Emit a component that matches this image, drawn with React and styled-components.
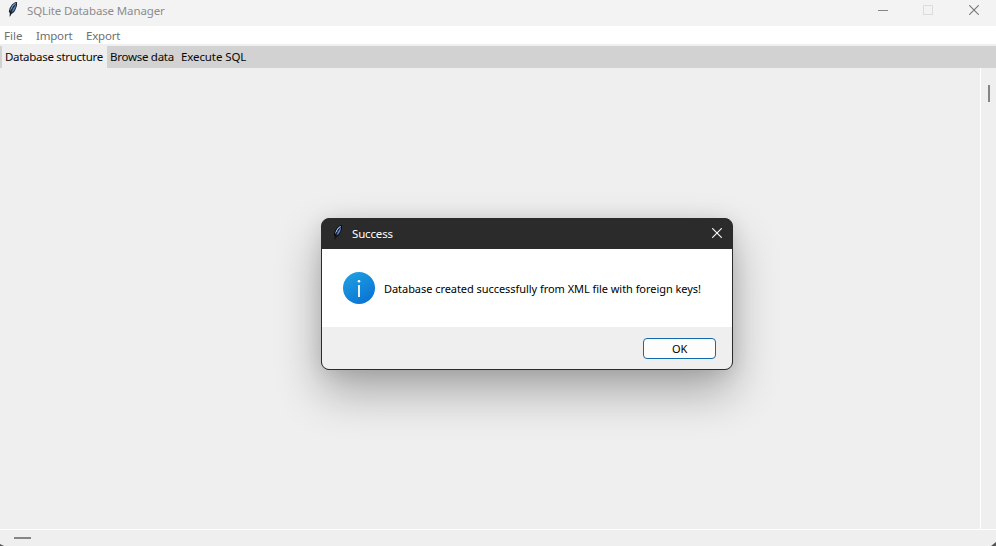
import React from 'react';
import styled, { createGlobalStyle } from 'styled-components';

const GlobalStyle = createGlobalStyle`
  *, *::before, *::after { box-sizing: border-box; }
  html, body { margin: 0; padding: 0; overflow: hidden; background: #efefef; }
  button { font: inherit; padding: 0; border: 0; background: none; color: inherit; }
`;

const Window = styled.div`
  position: relative;
  display: flex;
  flex-direction: column;
  width: 996px;
  height: 546px;
  overflow: hidden;
  background: #efefef;
  color: #111;
  font-family: 'Noto Sans', 'Open Sans', sans-serif;
  font-size: 11.5px;
  line-height: 16px;
  white-space: nowrap;
`;

const Label = styled.span`
  display: block;
  letter-spacing: ${(p) => p.$track || 0}px;
`;

const TitleBar = styled.header`
  display: flex;
  flex: 0 0 26px;
  padding-left: 6px;
  background: #f3f3f3;
  color: #8d8d8d;
`;

const TitleText = styled.h1`
  flex: 1;
  margin: 3px 0 0 6px;
  font-size: 11.5px;
  font-weight: 400;
`;

const FeatherIcon = styled.svg`
  display: block;
  flex: none;
  width: 15px;
  height: 18px;
  margin-top: ${(p) => p.$top}px;
`;

const WindowControls = styled.div`
  display: flex;
  height: 20px;
`;

const ControlButton = styled.button`
  display: grid;
  place-items: center;
  width: ${(p) => p.$width}px;
  height: ${(p) => p.$height || 20}px;
  margin-left: ${(p) => p.$gap || 0}px;
  color: ${(p) => p.$color};
  svg { display: block; }
`;

const MenuBar = styled.nav`
  display: flex;
  flex: 0 0 18px;
  gap: 14px;
  padding: 2px 4px 0;
  background: #fff;
  color: #6f6f6f;
`;

const MenuItem = styled.button`
  width: ${(p) => p.$width}px;
  height: 16px;
  text-align: left;
`;

const TabBar = styled.div`
  display: flex;
  flex: 0 0 22px;
  margin-top: 2px;
  padding-left: 2px;
  background: #d2d2d2;
`;

const Tab = styled.button`
  width: ${(p) => p.$width}px;
  height: 22px;
  padding: 0 3px;
  text-align: left;
  color: #080808;
  background: ${(p) => (p.$active ? '#efefef' : 'transparent')};
`;

const Workspace = styled.main`
  display: flex;
  flex: 1;
  border-bottom: 1px solid #fff;
`;

const Canvas = styled.section`
  flex: 1;
`;

const VerticalTrack = styled.div`
  width: 16px;
  padding: 17px 0 0 7px;
  border-left: 1px solid #fff;
`;

const HorizontalTrack = styled.div`
  display: flex;
  flex: 0 0 16px;
  padding: 7px 0 0 14px;
`;

const Thumb = styled.div`
  width: ${(p) => (p.$vertical ? 2 : 17)}px;
  height: ${(p) => (p.$vertical ? 17 : 2)}px;
  background: #858585;
`;

const WindowCorner = styled.svg`
  position: absolute;
  bottom: 0;
  ${(p) => (p.$right ? 'right: 0;' : 'left: 0;')}
`;

const Dialog = styled.section`
  position: absolute;
  left: 321px;
  top: 218px;
  display: flex;
  flex-direction: column;
  width: 412px;
  height: 152px;
  overflow: hidden;
  border: 1px solid #2b2b2b;
  border-radius: 8px;
  background: #2b2b2b;
  box-shadow: 0 22px 46px rgba(0, 0, 0, 0.3), 0 2px 20px rgba(0, 0, 0, 0.1);
`;

const DialogHeader = styled.header`
  display: flex;
  flex: 0 0 30px;
  padding-left: 9px;
  color: #fff;
`;

const DialogTitle = styled.h2`
  flex: 1;
  margin: 7px 0 0 6px;
  font-size: 11.5px;
  font-weight: 400;
`;

const DialogBody = styled.div`
  display: flex;
  flex: 0 0 78px;
  gap: 9px;
  padding: 23px 0 0 21px;
  background: #fff;
  svg { display: block; flex: none; }
`;

const Message = styled.p`
  margin: 9px 0 0;
  font-size: 11px;
  color: #000;
`;

const DialogFooter = styled.footer`
  display: flex;
  flex: 1;
  justify-content: flex-end;
  padding: 11px 16px 0 0;
  background: #efefef;
`;

const OkButton = styled.button`
  display: grid;
  place-items: center;
  width: 73px;
  height: 21px;
  border: 1px solid #1269ad;
  border-radius: 4px;
  background: #fdfdfd;
  font-size: 11px;
  color: #000;
`;

function Feather({ top, dark }) {
  return (
    <FeatherIcon $top={top} viewBox="0 0 15 18" aria-hidden="true">
      <path
        d="M3.7 16 3.8 12.3 2.8 10.4 3.7 7 6 3.4 9 1.2 11 1 11 4.5 9.8 8 8.2 10.9 5.4 13Z"
        fill={dark ? '#080b14' : '#1a2534'}
      />
      <path
        d="M4 10.3 4.8 7.2 6.7 4.1 9.2 2.1 10.1 2.2 7.2 5 5.4 8.2Z"
        fill={dark ? '#b9d5f5' : '#8ba8c8'}
      />
      <path d="M5.1 11.5 6.5 7.5 9.9 2.7 9.9 5 8.9 7.9 7.4 10.3Z" fill={dark ? '#5b86d2' : '#527fb8'} />
      <path d="M4.2 14.5 5 11.3 6.6 7.7 8.8 4.3" fill="none" stroke="#111a28" strokeWidth="0.7" />
    </FeatherIcon>
  );
}

function Cross() {
  return (
    <svg width="10" height="10" viewBox="0 0 10 10" aria-hidden="true">
      <path d="M.2.2 9.8 9.8M9.8.2.2 9.8" fill="none" stroke="currentColor" strokeWidth="1.1" />
    </svg>
  );
}

function InfoIcon() {
  return (
    <svg width="32" height="32" viewBox="0 0 32 32" aria-hidden="true">
      <defs>
        <linearGradient id="infoFill" x1="0.2" y1="0" x2="0.8" y2="1">
          <stop offset="0" stopColor="#209fe0" />
          <stop offset="1" stopColor="#0872d4" />
        </linearGradient>
      </defs>
      <circle cx="16" cy="16" r="16" fill="url(#infoFill)" />
      <circle cx="16" cy="9.2" r="1.3" fill="#fff" />
      <path d="M16 13v12" stroke="#fff" strokeWidth="1.8" />
    </svg>
  );
}

const menus = [
  { text: 'File', width: 18, track: 0 },
  { text: 'Import', width: 36, track: -0.2 },
  { text: 'Export', width: 36, track: -0.2 },
];

const tabs = [
  { text: 'Database structure', width: 105, track: -0.3 },
  { text: 'Browse data', width: 71, track: -0.27 },
  { text: 'Execute SQL', width: 72, track: -0.1 },
];

export default function App() {
  return (
    <>
      <GlobalStyle />
      <Window>
        <TitleBar>
          <Feather top={1} />
          <TitleText><Label $track={-0.13}>SQLite Database Manager</Label></TitleText>
          <WindowControls>
            <ControlButton $width={44} $color="#858585" aria-label="Minimize">
              <svg width="10" height="10"><path d="M0 5.5h10" stroke="currentColor" /></svg>
            </ControlButton>
            <ControlButton $width={46} $color="#dcdcdc" aria-label="Maximize">
              <svg width="10" height="10"><rect x=".5" y=".5" width="9" height="9" fill="none" stroke="currentColor" /></svg>
            </ControlButton>
            <ControlButton $width={44} $gap={1} $color="#777" aria-label="Close"><Cross /></ControlButton>
          </WindowControls>
        </TitleBar>
        <MenuBar>
          {menus.map((m) => (
            <MenuItem key={m.text} $width={m.width}><Label $track={m.track}>{m.text}</Label></MenuItem>
          ))}
        </MenuBar>
        <TabBar>
          {tabs.map((t, i) => (
            <Tab key={t.text} $width={t.width} $active={i === 0}><Label $track={t.track}>{t.text}</Label></Tab>
          ))}
        </TabBar>
        <Workspace>
          <Canvas />
          <VerticalTrack><Thumb $vertical /></VerticalTrack>
        </Workspace>
        <HorizontalTrack><Thumb /></HorizontalTrack>
        <WindowCorner width="4" height="2"><path d="M0 0 4 2H0Z" fill="#555" /></WindowCorner>
        <WindowCorner $right width="5" height="4"><path d="M5 0V4H0Z" fill="#555" /></WindowCorner>
        <Dialog role="dialog" aria-label="Success">
          <DialogHeader>
            <Feather top={5} dark />
            <DialogTitle><Label $track={-0.15}>Success</Label></DialogTitle>
            <ControlButton $width={30} $height={28} $color="#fff" aria-label="Close dialog"><Cross /></ControlButton>
          </DialogHeader>
          <DialogBody>
            <InfoIcon />
            <Message><Label $track={-0.05}>Database created successfully from XML file with foreign keys!</Label></Message>
          </DialogBody>
          <DialogFooter>
            <OkButton><Label $track={-0.2}>OK</Label></OkButton>
          </DialogFooter>
        </Dialog>
      </Window>
    </>
  );
}
